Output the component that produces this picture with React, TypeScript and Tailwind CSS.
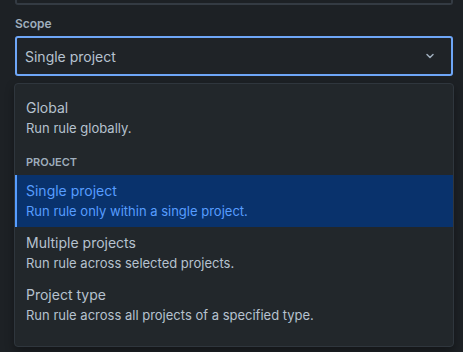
import { ChevronDown } from "lucide-react";

interface Option {
  label: string;
  description: string;
  selected?: boolean;
}

function OptionRow({ label, description, selected }: Option) {
  return (
    <div
      className={`flex flex-col py-1.5 pl-[9px] pr-3 border-l-2 ${
        selected ? "bg-[#09326c] border-[#579dff]" : "border-transparent"
      }`}
    >
      <span className={`text-[14px] leading-5 ${selected ? "text-[#579dff]" : "text-[#b6c2cf]"}`}>{label}</span>
      <span className={`text-[13px] leading-5 ${selected ? "text-[#579dff]" : "text-[#b6c2cf]"}`}>{description}</span>
    </div>
  );
}

export default function App() {
  return (
    <div
      className="w-[463px] h-[352px] overflow-hidden bg-[#1d2125] px-[15px]"
      style={{ fontFamily: 'Inter, "Liberation Sans", sans-serif' }}
    >
      {/* bottom edge of the previous field */}
      <div className="h-[5px] w-[438px] border-x-2 border-b-2 border-[#343b43] rounded-b-[3px]" />

      <label className="block mt-[11px] text-[12px] leading-4 font-semibold text-[#9fadbc]">Scope</label>

      <div className="mt-1 w-[438px] h-[40px] flex items-center justify-between border-2 border-[#6ea6f7] rounded-[3px] bg-[#1f2327] pl-[8px] pr-[15px]">
        <span className="text-[14px] text-[#b6c2cf]">Single project</span>
        <ChevronDown size={12} strokeWidth={3} className="text-[#9fadbc]" />
      </div>

      <div className="mt-[7px] -ml-px w-[440px] bg-[#22272b] border border-[#2f363d] rounded-[4px] pt-2 pb-[15px] shadow-[0_4px_8px_rgba(0,0,0,0.35)]">
        <OptionRow label="Global" description="Run rule globally." />
        <div className="pt-[10px] pb-[5px] pl-[11px] text-[11px] leading-4 font-semibold text-[#9fadbc]">PROJECT</div>
        <OptionRow label="Single project" description="Run rule only within a single project." selected />
        <OptionRow label="Multiple projects" description="Run rule across selected projects." />
        <OptionRow label="Project type" description="Run rule across all projects of a specified type." />
      </div>
    </div>
  );
}
